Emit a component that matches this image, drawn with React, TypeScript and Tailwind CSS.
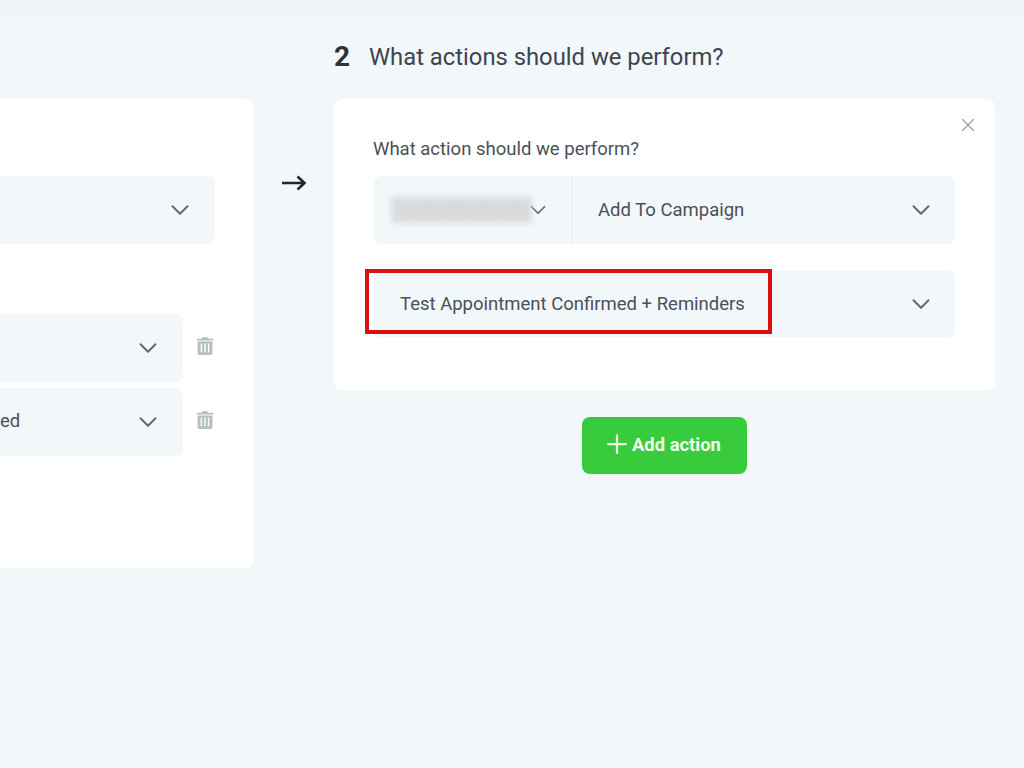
import { ChevronDown, Plus, X } from "lucide-react";

function Chevron({ className = "h-[30px] w-[30px]" }: { className?: string }) {
  return <ChevronDown className={`shrink-0 text-[#5f6b76] ${className}`} strokeWidth={1.6} />;
}

function Trash() {
  return (
    <svg width="20" height="20" viewBox="0 0 20 20" className="mb-[4px] text-[#b4bfc1]">
      <path
        fill="currentColor"
        fillRule="evenodd"
        d="M7.5 1.2h5l.8 1.5h4.4c.4 0 .6.3.6.6v1.2H1.7V3.3c0-.3.2-.6.6-.6h4.4zM2.6 5.4h14.8v11.8c0 1-.8 1.7-1.7 1.7H4.3c-1 0-1.7-.8-1.7-1.7zm3.1 2.2v8.7h1.4V7.6zm3.6 0v8.7h1.4V7.6zm3.6 0v8.7h1.4V7.6z"
      />
    </svg>
  );
}

function LeftRow({ text }: { text?: string }) {
  return (
    <div className="flex items-center gap-[12px]">
      <div className="flex h-[68px] w-[183px] items-center justify-between rounded-r-lg bg-[#f2f7fa] pr-[20px] text-[18.5px] text-[#4a5058]">
        <span>{text}</span>
        <Chevron />
      </div>
      <Trash />
    </div>
  );
}

export default function App() {
  return (
    <div className="flex h-[768px] w-[1024px] overflow-hidden bg-[linear-gradient(#eef2f4,#f2f7fa_24px)] font-['Roboto',sans-serif]">
      <div className="mt-[99px] h-[469px] w-[254px] shrink-0 rounded-r-lg bg-white">
        <div className="mt-[77px] flex h-[68px] w-[215px] items-center justify-end rounded-r-lg bg-[#f2f7fa] pr-[20px]">
          <Chevron />
        </div>
        <div className="mt-[70px] flex flex-col gap-[6px]">
          <LeftRow />
          <LeftRow text="ed" />
        </div>
      </div>

      <div className="flex w-[80px] shrink-0 justify-center pt-[170px]">
        <svg width="26" height="26" viewBox="0 0 26 26" fill="none" stroke="#22282e" strokeWidth="2.6">
          <path d="M1 13h23M16.5 6.5l7 6.5-7 6.5" />
        </svg>
      </div>

      <div className="w-[661px] shrink-0">
        <h2 className="flex h-[99px] items-center pt-[14px] text-[23.8px] leading-[28px] font-normal text-[#3c4550]">
          <span className="w-[35px] text-[28px] font-bold text-[#2b333b]">2</span>
          <span>What actions should we perform?</span>
        </h2>

        <div className="relative h-[291px] rounded-lg bg-white px-[40px] pt-[40px]">
          <X className="absolute top-[15px] right-[16px] h-[22px] w-[22px] text-[#9a9fa3]" strokeWidth={1.5} />
          <div className="-ml-[1px] h-[37px] text-[18.5px] leading-[21px] text-[#4a5058]">
            What action should we perform?
          </div>
          <div className="flex h-[68px] rounded-lg bg-[#f2f7fa] text-[18.5px] text-[#4a5058]">
            <div className="flex w-[198px] items-center border-r border-[#e3eaf0] pl-[18px]">
              <div className="h-[26px] w-[139px] bg-[repeating-linear-gradient(90deg,#d6d8da_0_7px,#dcdee0_7px_11px)] blur-[3px]" />
              <Chevron className="-ml-[6px] h-[26px] w-[26px]" />
            </div>
            <div className="flex flex-1 items-center justify-between pr-[19px] pl-[26px]">
              <span className="pt-[1px]">Add To Campaign</span>
              <Chevron />
            </div>
          </div>
          <div className="relative mt-[26px] flex h-[68px] items-center justify-between rounded-lg bg-[#f2f7fa] pr-[19px] pl-[26px] text-[18.5px] text-[#4a5058]">
            <span className="pt-[1px]">Test Appointment Confirmed + Reminders</span>
            <Chevron />
            <div className="absolute top-[-1px] left-[-9px] h-[65px] w-[407px] border-4 border-[#dc1010]" />
          </div>
        </div>

        <div className="mt-[27px] flex justify-center">
          <button className="flex h-[57px] w-[165px] items-center rounded-lg bg-[#38cb3b] pl-[20px] text-[18.4px] font-bold text-[#f0fff0]">
            <Plus className="mb-[3px] h-[30px] w-[30px]" strokeWidth={1.8} />
            <span className="pb-[1px]">Add action</span>
          </button>
        </div>
      </div>
    </div>
  );
}
